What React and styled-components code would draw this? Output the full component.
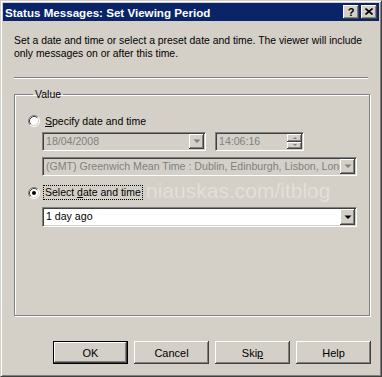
import React from "react";
import styled, { createGlobalStyle } from "styled-components";

const GlobalStyle = createGlobalStyle`
  html, body {
    margin: 0;
    padding: 0;
    background: #d4d0c8;
  }
  body {
    font-family: "Liberation Sans", Arial, sans-serif;
    color: #000;
  }
`;

const raised = `
  box-shadow: inset -1px -1px #404040, inset 1px 1px #fff,
    inset -2px -2px #808080, inset 2px 2px #d4d0c8;
`;

const Window = styled.div`
  position: relative;
  width: 382px;
  height: 377px;
  box-sizing: border-box;
  border: 1px solid;
  border-color: #d4d0c8 #404040 #404040 #d4d0c8;
  box-shadow: inset 1px 1px #fff, inset -1px -1px #808080;
  padding: 2px;
  background: #d4d0c8;
  display: flex;
  flex-direction: column;
  overflow: hidden;
`;

const TitleBar = styled.div`
  height: 18px;
  background: #0a246a;
  display: flex;
  align-items: center;
  padding: 0 2px 0 2px;
`;

const Title = styled.div`
  flex: 1;
  color: #fff;
  font-weight: bold;
  font-size: 11.6px;
  white-space: nowrap;
`;

const CaptionButtons = styled.div`
  display: flex;
  gap: 2px;
`;

const CaptionButton = styled.div`
  width: 16px;
  height: 14px;
  background: #d4d0c8;
  ${raised}
  display: flex;
  align-items: center;
  justify-content: center;
  font-weight: bold;
  font-size: 11px;
  line-height: 14px;
  color: #000;
  padding-bottom: 1px;
  box-sizing: border-box;
`;

const Body = styled.div`
  flex: 1;
  display: flex;
  flex-direction: column;
  padding: 13px 8px 0 11px;
`;

const Description = styled.div`
  font-size: 10.4px;
  line-height: 13px;
  white-space: nowrap;
`;

const Separator = styled.div`
  margin: 17px 3px 0 0;
  border-top: 1px solid #808080;
  border-bottom: 1px solid #fff;
`;

const Group = styled.fieldset`
  margin: 9px 1px 0 0;
  padding: 13px 0 88px 13px;
  border: 1px solid #808080;
  box-shadow: inset 1px 1px #fff, 1px 1px #fff;
  min-inline-size: 0;
`;

const Legend = styled.legend`
  margin-left: 5px;
  padding: 0 2px;
  font-size: 10.5px;
  line-height: 13px;
`;

const RadioRow = styled.label`
  display: flex;
  align-items: center;
  gap: 5px;
  height: ${(p) => p.$h || 14}px;
  margin-top: ${(p) => p.$mt || 0}px;
  font-size: 10.5px;
`;

const RadioLabel = styled.span`
  line-height: 13px;
  padding: 0 1px;
  border: 1px dotted ${(p) => (p.$focus ? "#000" : "transparent")};
  margin-left: -2px;
`;

const FieldRow = styled.div`
  display: flex;
  gap: 9px;
  margin: ${(p) => p.$mt || 0}px 0 0 14px;
`;

const Field = styled.div`
  width: ${(p) => p.$w}px;
  height: ${(p) => p.$h || 19}px;
  box-sizing: border-box;
  border: 1px solid;
  border-color: #808080 #fff #fff #808080;
  box-shadow: inset 1px 1px #404040, inset -1px -1px #d4d0c8;
  padding: 1px;
  display: flex;
  background: ${(p) => (p.$disabled ? "#d4d0c8" : "#fff")};
`;

const FieldText = styled.div`
  flex: 1;
  min-width: 0;
  font-size: 10.6px;
  line-height: 15px;
  padding-left: 2px;
  white-space: nowrap;
  overflow: hidden;
  color: ${(p) => (p.$disabled ? "#808080" : "#000")};
`;

const DropButton = styled.div`
  width: 15px;
  flex-shrink: 0;
  background: #d4d0c8;
  ${raised}
  display: flex;
  align-items: center;
  justify-content: center;
`;

const SpinBox = styled.div`
  width: 15px;
  display: flex;
  flex-direction: column;
`;

const SpinButton = styled.div`
  flex: 1;
  background: #d4d0c8;
  ${raised}
  display: flex;
  align-items: center;
  justify-content: center;
`;

const ButtonRow = styled.div`
  display: flex;
  justify-content: flex-end;
  gap: 6px;
  margin-top: 25px;
`;

const Button = styled.div`
  width: 75px;
  height: 23px;
  box-sizing: border-box;
  background: #d4d0c8;
  font-size: 11px;
  display: flex;
  align-items: center;
  justify-content: center;
  ${(p) =>
    p.$default
      ? `border: 1px solid #000;
         box-shadow: inset -1px -1px #404040, inset 1px 1px #fff,
           inset -2px -2px #808080;`
      : raised}
`;

const Watermark = styled.div`
  position: absolute;
  left: 145px;
  top: 179px;
  font-size: 21px;
  line-height: 21px;
  color: rgba(255, 255, 255, 0.35);
  white-space: nowrap;
  pointer-events: none;
`;

const Arrow = ({ disabled }) => (
  <svg width="8" height="5" viewBox="0 0 8 5">
    <path d="M0.5 0.5h7L4 4z" fill={disabled ? "#808080" : "#000"} />
  </svg>
);

const SpinArrow = ({ up }) => (
  <svg width="6" height="4" viewBox="0 0 6 4">
    <path d={up ? "M1 3h4L3 1z" : "M1 1h4L3 3z"} fill="#808080" />
  </svg>
);

const Radio = ({ checked }) => (
  <svg width="12" height="12" viewBox="0 0 12 12">
    <circle cx="6" cy="6" r="5" fill="#fff" />
    <path d="M2.11 9.89A5.5 5.5 0 0 1 9.89 2.11" stroke="#808080" fill="none" />
    <path d="M9.89 2.11A5.5 5.5 0 0 1 2.11 9.89" stroke="#fff" fill="none" />
    <path d="M2.82 9.18A4.5 4.5 0 0 1 9.18 2.82" stroke="#404040" fill="none" />
    <path d="M9.18 2.82A4.5 4.5 0 0 1 2.82 9.18" stroke="#d4d0c8" fill="none" />
    {checked && <circle cx="6" cy="6" r="2" fill="#000" />}
  </svg>
);

const CloseIcon = () => (
  <svg width="8" height="7" viewBox="0 0 8 7">
    <path d="M0.5 0.5l7 6M7.5 0.5l-7 6" stroke="#000" strokeWidth="1.6" />
  </svg>
);

export default function App() {
  return (
    <>
      <GlobalStyle />
      <Window>
        <TitleBar>
          <Title>Status Messages: Set Viewing Period</Title>
          <CaptionButtons>
            <CaptionButton>?</CaptionButton>
            <CaptionButton>
              <CloseIcon />
            </CaptionButton>
          </CaptionButtons>
        </TitleBar>
        <Body>
          <Description>
            Set a date and time or select a preset date and time. The viewer will include
            <br />
            only messages on or after this time.
          </Description>
          <Separator />
          <Group>
            <Legend>Value</Legend>
            <RadioRow>
              <Radio />
              <RadioLabel>
                <u>S</u>pecify date and time
              </RadioLabel>
            </RadioRow>
            <FieldRow $mt={4}>
              <Field $w={164} $disabled>
                <FieldText $disabled>18/04/2008</FieldText>
                <DropButton>
                  <Arrow disabled />
                </DropButton>
              </Field>
              <Field $w={89} $disabled>
                <FieldText $disabled>14:06:16</FieldText>
                <SpinBox>
                  <SpinButton>
                    <SpinArrow up />
                  </SpinButton>
                  <SpinButton>
                    <SpinArrow />
                  </SpinButton>
                </SpinBox>
              </Field>
            </FieldRow>
            <FieldRow $mt={6}>
              <Field $w={315} $disabled>
                <FieldText $disabled>
                  (GMT) Greenwich Mean Time : Dublin, Edinburgh, Lisbon, London
                </FieldText>
                <DropButton>
                  <Arrow disabled />
                </DropButton>
              </Field>
            </FieldRow>
            <RadioRow $mt={9} $h={15}>
              <Radio checked />
              <RadioLabel $focus>
                Select <u>d</u>ate and time
              </RadioLabel>
            </RadioRow>
            <FieldRow $mt={7}>
              <Field $w={315} $h={20}>
                <FieldText>1 day ago</FieldText>
                <DropButton>
                  <Arrow />
                </DropButton>
              </Field>
            </FieldRow>
          </Group>
          <ButtonRow>
            <Button $default>OK</Button>
            <Button>Cancel</Button>
            <Button>
              Ski<u>p</u>
            </Button>
            <Button>Help</Button>
          </ButtonRow>
        </Body>
        <Watermark>niauskas.com/itblog</Watermark>
      </Window>
    </>
  );
}
